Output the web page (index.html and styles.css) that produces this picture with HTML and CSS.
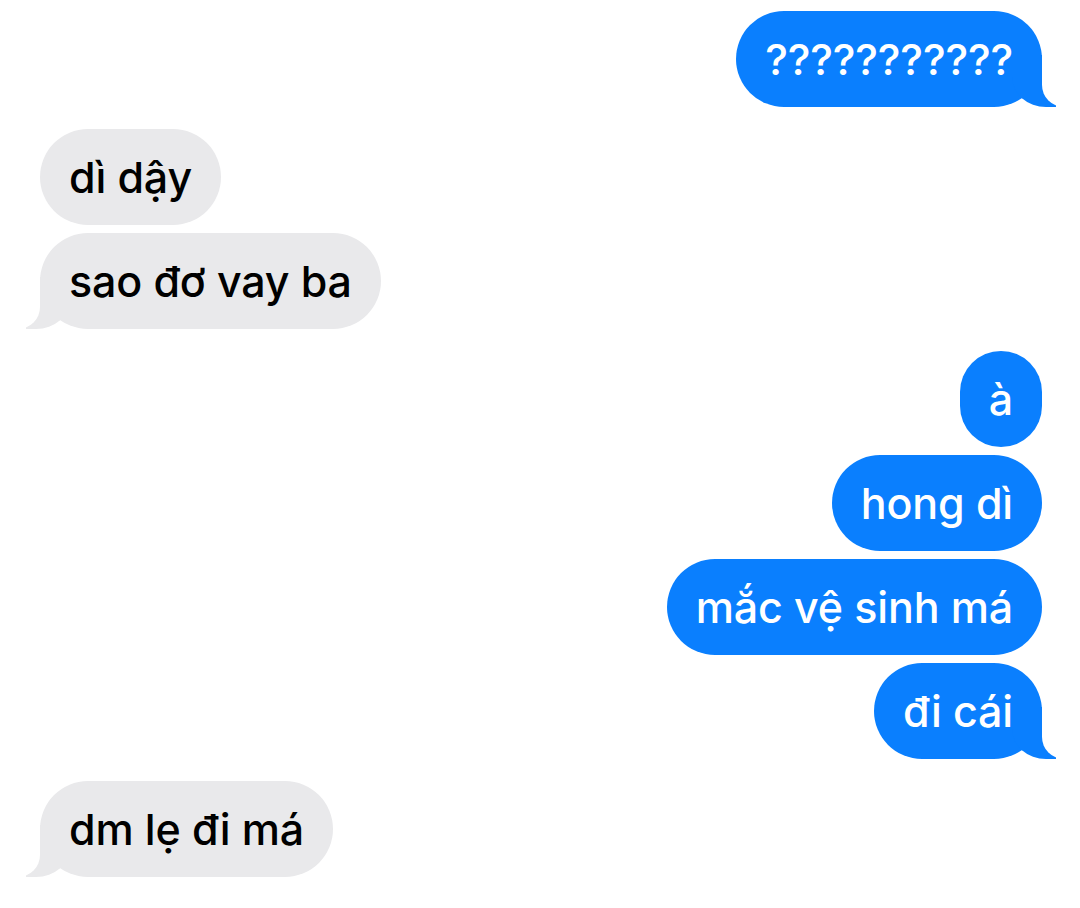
FILE: index.html
```html
<!doctype html>
<html lang="vi">
<head>
  <meta charset="utf-8" />
  <title>Tin nhắn</title>
  <link rel="stylesheet" href="styles.css">
</head>
<body>

<main class="thread">
  <div class="group sent">
    <p class="bubble tail">???????????</p>
  </div>
  <div class="group received">
    <p class="bubble">dì dậy</p>
    <p class="bubble tail">sao đơ vay ba</p>
  </div>
  <div class="group sent">
    <p class="bubble">à</p>
    <p class="bubble">hong dì</p>
    <p class="bubble">mắc vệ sinh má</p>
    <p class="bubble tail">đi cái</p>
  </div>
  <div class="group received">
    <p class="bubble tail">dm lẹ đi má</p>
  </div>
</main>

</body>
</html>
```

FILE: styles.css
```css
body {
  margin: 0;
  background-color: #fff;
  font-family: Inter, "Noto Sans", "Liberation Sans", sans-serif;
}
.thread {
  display: flex;
  flex-direction: column;
  gap: 22px;
  padding: 11px 38px 0 40px;
}
.group {
  display: flex;
  flex-direction: column;
  gap: 8px;
}
.group.sent {
  align-items: flex-end;
}
.group.received {
  align-items: flex-start;
}
.bubble {
  position: relative;
  z-index: 0;
  margin: 0;
  padding: 24px 29px;
  border-radius: 48px;
  font-size: 43px;
  font-weight: 500;
  letter-spacing: -0.15px;
  line-height: 48px;
  white-space: nowrap;
}
.sent .bubble {
  background-color: #0a7ffe;
  color: #fff;
}
.received .bubble {
  background-color: #e9e9eb;
  color: #000;
}
.tail::before,
.tail::after {
  content: "";
  position: absolute;
  bottom: 0;
  height: 52px;
  z-index: -1;
}
.sent .tail::before {
  right: -14px;
  width: 44px;
  background-color: #0a7ffe;
  border-bottom-left-radius: 34px 30px;
}
.sent .tail::after {
  right: -54px;
  width: 54px;
  background-color: #fff;
  border-bottom-left-radius: 22px;
}
.received .tail::before {
  left: -14px;
  width: 44px;
  background-color: #e9e9eb;
  border-bottom-right-radius: 34px 30px;
}
.received .tail::after {
  left: -54px;
  width: 54px;
  background-color: #fff;
  border-bottom-right-radius: 22px;
}
```
